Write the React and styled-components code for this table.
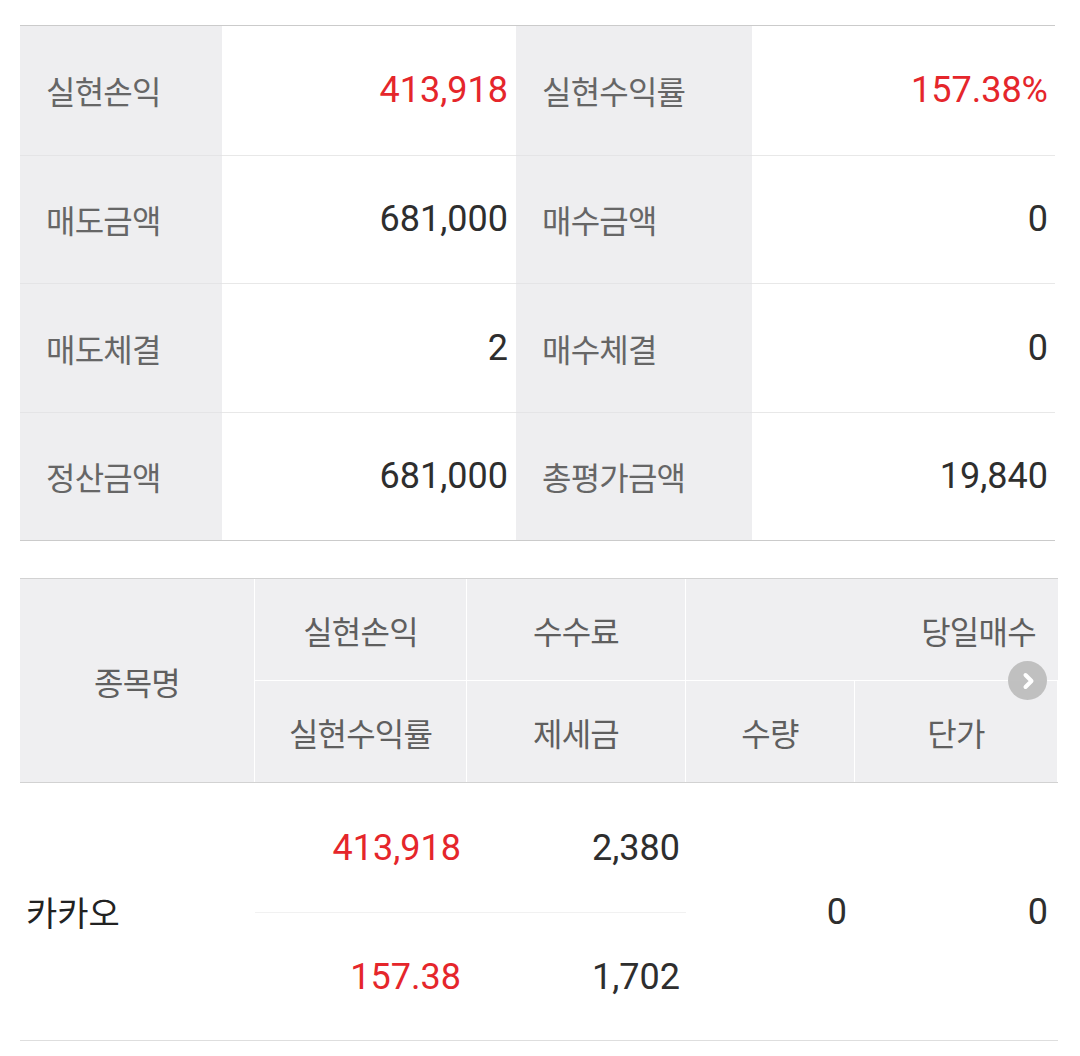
import React from "react";
import styled, { createGlobalStyle } from "styled-components";

const GlobalStyle = createGlobalStyle`
  html, body { margin: 0; padding: 0; background: #fff; }
  body { font-family: "Noto Sans CJK KR", "Noto Sans", sans-serif; }
  * { box-sizing: border-box; }
`;

const RED = "#e5262b";
const KR = `"Noto Sans CJK KR", "Noto Sans", sans-serif`;
const NUM = `Roboto, "Noto Sans CJK KR", sans-serif`;

const Page = styled.div`
  padding: 25px 22px 0 20px;
  width: 1080px;
`;

const Summary = styled.div`
  display: grid;
  width: 1035px;
  grid-template-columns: 202px 294px 236px 303px;
  grid-auto-rows: 128.5px;
  border-top: 1px solid #cbcbcb;
  border-bottom: 1px solid #cbcbcb;
`;

const LabelCell = styled.div`
  background: #eeeef0;
  display: flex;
  align-items: center;
  padding-left: 26px;
  font-family: ${KR};
  font-size: 32px;
  letter-spacing: -0.8px;
  color: #666;
  border-top: ${(p) => (p.$first ? "none" : "1px solid #e4e4e6")};
`;

const ValueCell = styled.div`
  background: #fff;
  display: flex;
  align-items: center;
  justify-content: flex-end;
  padding-right: ${(p) => p.$pr || 8}px;
  font-family: ${NUM};
  font-size: 36px;
  color: ${(p) => (p.$red ? RED : "#2e2e2e")};
  border-top: ${(p) => (p.$first ? "none" : "1px solid #e8e8e8")};
`;

const ScrollArea = styled.div`
  position: relative;
  margin-top: 37px;
  width: 1038px;
  overflow: hidden;
`;

const Table = styled.div`
  width: 1252px;
`;

const COLS = "235px 212px 219px 169px 203px 214px";

const HeadGrid = styled.div`
  display: grid;
  grid-template-columns: ${COLS};
  grid-template-rows: 102px 101px;
  border-top: 1px solid #d2d2d2;
  border-bottom: 1px solid #d2d2d2;
  background: #efeff1;
`;

const HeadCell = styled.div`
  display: flex;
  align-items: center;
  justify-content: center;
  font-family: ${KR};
  font-size: 32px;
  letter-spacing: -0.8px;
  color: #5f5f5f;
  border-right: 1px solid #fff;
  border-bottom: ${(p) => (p.$divider ? "1px solid #fff" : "none")};
  grid-row: ${(p) => p.$row || "auto"};
  grid-column: ${(p) => p.$col || "auto"};
`;

const BodyGrid = styled.div`
  display: grid;
  grid-template-columns: ${COLS};
  grid-template-rows: 130px 127px;
  border-bottom: 1px solid #dedede;
`;

const NameCell = styled.div`
  grid-row: 1 / span 2;
  display: flex;
  align-items: center;
  padding-left: 6px;
  font-family: ${KR};
  font-size: 34px;
  color: #222;
`;

const NumCell = styled.div`
  display: flex;
  align-items: center;
  justify-content: flex-end;
  padding-right: ${(p) => p.$pr || 6}px;
  font-family: ${NUM};
  font-size: 36px;
  color: ${(p) => (p.$red ? RED : "#2e2e2e")};
  grid-row: ${(p) => p.$row || "auto"};
  grid-column: ${(p) => p.$col || "auto"};
  border-bottom: ${(p) => (p.$divider ? "1px solid #f1f1f1" : "none")};
`;

const ScrollHint = styled.div`
  position: absolute;
  top: 83px;
  right: 11px;
  width: 39px;
  height: 39px;
  border-radius: 50%;
  background: rgba(188, 188, 188, 0.92);
  display: flex;
  align-items: center;
  justify-content: center;
`;

const summary = [
  ["실현손익", "413,918", true, "실현수익률", "157.38%", true],
  ["매도금액", "681,000", false, "매수금액", "0", false],
  ["매도체결", "2", false, "매수체결", "0", false],
  ["정산금액", "681,000", false, "총평가금액", "19,840", false],
];

export default function App() {
  return (
    <>
      <GlobalStyle />
      <Page>
        <Summary>
          {summary.map(([l1, v1, r1, l2, v2, r2], i) => (
            <React.Fragment key={l1}>
              <LabelCell $first={i === 0}>{l1}</LabelCell>
              <ValueCell $first={i === 0} $red={r1} $pr={8}>
                {v1}
              </ValueCell>
              <LabelCell $first={i === 0}>{l2}</LabelCell>
              <ValueCell $first={i === 0} $red={r2} $pr={7}>
                {v2}
              </ValueCell>
            </React.Fragment>
          ))}
        </Summary>

        <ScrollArea>
          <Table>
            <HeadGrid>
              <HeadCell $row="1 / span 2" $col="1">종목명</HeadCell>
              <HeadCell $divider $row="1" $col="2">실현손익</HeadCell>
              <HeadCell $divider $row="1" $col="3">수수료</HeadCell>
              <HeadCell $divider $row="1" $col="4 / span 3">당일매수</HeadCell>
              <HeadCell $row="2" $col="2">실현수익률</HeadCell>
              <HeadCell $row="2" $col="3">제세금</HeadCell>
              <HeadCell $row="2" $col="4">수량</HeadCell>
              <HeadCell $row="2" $col="5">단가</HeadCell>
              <HeadCell $row="2" $col="6" />
            </HeadGrid>
            <BodyGrid>
              <NameCell>카카오</NameCell>
              <NumCell $red $divider $row="1" $col="2">413,918</NumCell>
              <NumCell $divider $row="1" $col="3">2,380</NumCell>
              <NumCell $row="1 / span 2" $col="4" $pr={8}>0</NumCell>
              <NumCell $row="1 / span 2" $col="5" $pr={10}>0</NumCell>
              <NumCell $row="1 / span 2" $col="6" $pr={10} />
              <NumCell $red $row="2" $col="2">157.38</NumCell>
              <NumCell $row="2" $col="3">1,702</NumCell>
            </BodyGrid>
          </Table>
          <ScrollHint>
            <svg width="20" height="20" viewBox="0 0 20 20">
              <path
                d="M7.5 4 L13.5 10 L7.5 16"
                fill="none"
                stroke="#fff"
                strokeWidth="4"
                strokeLinecap="round"
                strokeLinejoin="round"
              />
            </svg>
          </ScrollHint>
        </ScrollArea>
      </Page>
    </>
  );
}
